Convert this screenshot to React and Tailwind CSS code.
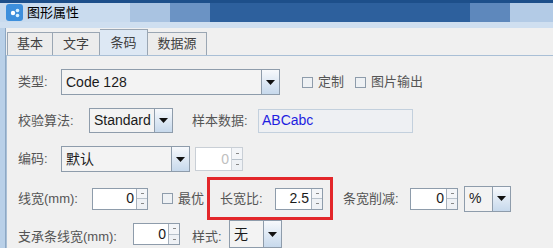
import React from 'react';

const font = { fontFamily: '"Liberation Sans", "Noto Sans CJK SC", sans-serif' };

function Caret() {
  return (
    <svg width="9" height="5" viewBox="0 0 9 5">
      <path d="M0 0 H9 L4.5 5 Z" fill="#111" />
    </svg>
  );
}

function Combo({ value, width, height = 26, bg = 'bg-[#f3f3f3]' }) {
  return (
    <div
      className={`flex border border-[#8e9cab] ${bg}`}
      style={{ width, height }}
    >
      <div className="flex-1 flex items-center pl-[4px] text-[14px] text-[#1a1a1a] truncate">{value}</div>
      <div className="w-[18px] border-l border-[#8e9cab] bg-[#dfe8f2] bg-gradient-to-b from-[#f7f9fc] to-[#c7d9ec] flex items-center justify-center">
        <Caret />
      </div>
    </div>
  );
}

function Spinner({ value, width, height = 22, disabled = false }) {
  return (
    <div
      className={`flex border ${disabled ? 'border-[#c9cfd6]' : 'border-[#8e9cab]'} bg-white`}
      style={{ width, height }}
    >
      <div
        className={`flex-1 flex items-center justify-end pr-[2px] text-[14px] ${disabled ? 'text-[#c0c0c0]' : 'text-[#1a1a1a]'}`}
      >
        {value}
      </div>
      <div className={`w-[11px] flex flex-col border-l ${disabled ? 'border-[#d0d5db]' : 'border-[#a6b1bd]'}`}>
        <div className="flex-1 flex items-center justify-center bg-[#f3f5f8] border-b border-[#b8c2cc]">
          <div className="w-[3px] h-[1px] bg-[#888]" />
        </div>
        <div className="flex-1 flex items-center justify-center bg-[#eef1f5]">
          <div className="w-[3px] h-[1px] bg-[#888]" />
        </div>
      </div>
    </div>
  );
}

function Check({ label }) {
  return (
    <div className="flex items-center">
      <div className="w-[11px] h-[11px] border border-[#8e9cab] bg-[#eef1f4]" />
      <span className="ml-[5px] text-[13px] text-[#555]">{label}</span>
    </div>
  );
}

function Label({ children, className = '' }) {
  return <span className={`text-[13px] text-[#555] whitespace-nowrap ${className}`}>{children}</span>;
}

export default function App() {
  return (
    <div className="w-[553px] h-[248px] overflow-hidden bg-[#f0f0f0] flex flex-col" style={font}>
      {/* title bar */}
      <div className="h-[28px] shrink-0 flex flex-col bg-[#2d609d]">
        <div className="h-[3px] shrink-0 bg-[#1d4f8a]" />
        <div className="h-[19px] shrink-0 flex">
          <div className="w-[130px] shrink-0 flex items-center bg-[#c9dbee]">
            <div className="ml-[6px] w-[17px] h-[17px] rounded-[3px] bg-[#3d8fdc] flex items-center justify-center">
              <svg width="12" height="12" viewBox="0 0 12 12">
                <circle cx="4" cy="6" r="2.2" fill="#fff" />
                <circle cx="8.5" cy="3.5" r="1.8" fill="#d9f0ff" />
                <circle cx="8.5" cy="8.5" r="1.8" fill="#d9f0ff" />
              </svg>
            </div>
            <span className="ml-[4px] text-[13px] text-black">图形属性</span>
          </div>
          <div className="w-[40px] shrink-0 bg-[#a9c3e1]" />
          <div className="w-[40px] shrink-0 bg-[#6b93c4]" />
          <div className="w-[260px] shrink-0 bg-[#2d609d]" />
          <div className="w-[40px] shrink-0 bg-[#5e88bc]" />
          <div className="flex-1 bg-[#b3cbe6]" />
        </div>
        <div className="flex-1 bg-[#cfdff0]" />
      </div>

      <div className="flex flex-1">
        {/* window left frame */}
        <div className="w-[6px] bg-[#b9d0e8] border-r border-[#8da8c4]" />
        <div className="flex-1 flex flex-col">
          {/* tabs */}
          <div className="h-[27px] flex items-end pl-[1px]">
            <div className="w-[46px] h-[23px] border border-b-0 border-[#9aa6b3] bg-[#ececec] flex items-center justify-center text-[13px] text-[#404040]">基本</div>
            <div className="w-[47px] h-[23px] border border-b-0 border-l-0 border-[#9aa6b3] bg-[#ececec] flex items-center justify-center text-[13px] text-[#404040]">文字</div>
            <div className="w-[48px] h-[26px] border border-b-0 border-l-0 border-[#9aa6b3] bg-[#dde8f4] flex items-center justify-center text-[13px] text-[#404040]">条码</div>
            <div className="w-[59px] h-[23px] border border-b-0 border-l-0 border-[#9aa6b3] bg-[#ececec] flex items-center justify-center text-[13px] text-[#404040]">数据源</div>
          </div>

          {/* panel */}
          <div className="flex-1 border-t border-l border-[#a9bfd6] pl-[11px] flex flex-col">
            {/* row 1 */}
            <div className="mt-[13px] flex items-center h-[26px]">
              <Label className="w-[43px]">类型:</Label>
              <Combo value="Code 128" width={219} />
              <div className="ml-[22px]"><Check label="定制" /></div>
              <div className="ml-[11px]"><Check label="图片输出" /></div>
            </div>

            {/* row 2 */}
            <div className="mt-[13px] flex items-center h-[25px]">
              <Label className="w-[71px]">校验算法:</Label>
              <Combo value="Standard" width={84} height={25} />
              <Label className="ml-[19px] w-[66px]">样本数据:</Label>
              <div className="w-[155px] h-[24px] border border-[#c3d0dd] bg-[#eef0f3] flex items-center pl-[3px] text-[14px] text-[#1e1ee0]">
                ABCabc
              </div>
            </div>

            {/* row 3 */}
            <div className="mt-[13px] flex items-center h-[26px]">
              <Label className="w-[43px]">编码:</Label>
              <Combo value="默认" width={129} />
              <div className="ml-[5px]"><Spinner value="0" width={48} height={24} disabled /></div>
            </div>

            {/* row 4 */}
            <div className="mt-[5px] flex items-center h-[43px]">
              <Label className="w-[74px]">线宽(mm):</Label>
              <Spinner value="0" width={56} />
              <div className="ml-[14px]"><Check label="最优" /></div>
              <div className="ml-[3px] h-[43px] w-[126px] border-[3px] border-[#e3262a] flex items-center pl-[10px]">
                <Label className="w-[55px]">长宽比:</Label>
                <Spinner value="2.5" width={48} />
              </div>
              <Label className="ml-[10px] w-[67px]">条宽削减:</Label>
              <Spinner value="0" width={48} />
              <div className="ml-[6px]"><Combo value="%" width={47} /></div>
            </div>

            {/* row 5 */}
            <div className="mt-[3px] flex items-start h-[30px]">
              <Label className="w-[115px] mt-[4px]">支承条线宽(mm):</Label>
              <Spinner value="0" width={47} />
              <Label className="ml-[12px] w-[37px] mt-[4px]">样式:</Label>
              <div className="-mt-[3px]"><Combo value="无" width={53} height={28} /></div>
            </div>
          </div>
        </div>
      </div>
    </div>
  );
}
